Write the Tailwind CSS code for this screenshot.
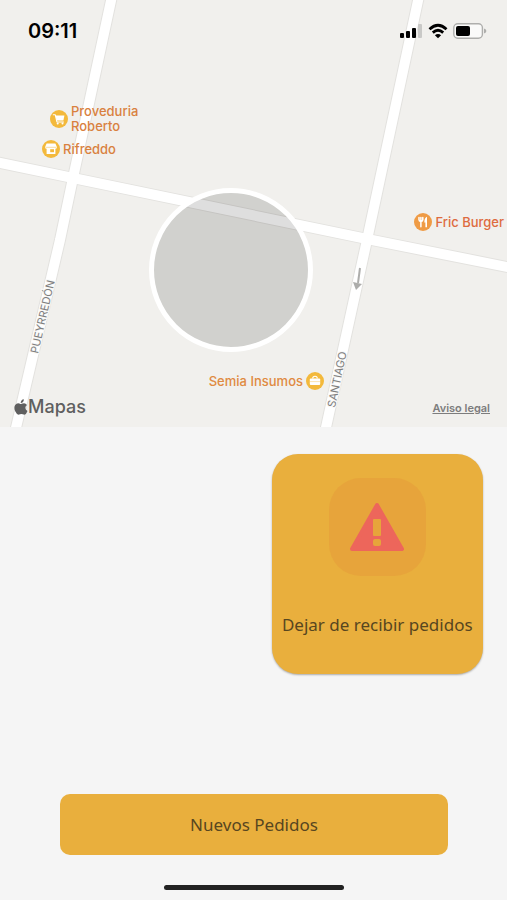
<!DOCTYPE html>
<html lang="es">
<head>
    <meta charset="UTF-8">
    <meta name="viewport" content="width=device-width, initial-scale=1.0">
    <title>Pedidos</title>
    <script src="https://cdn.jsdelivr.net/npm/@tailwindcss/browser@4"></script>
</head>
<body class="min-h-screen flex flex-col bg-[#f5f5f5] font-['Inter',sans-serif]">

    <!-- Map -->
    <section class="relative h-[427px] overflow-hidden bg-[#f1f0ed]">
        <svg class="absolute top-0 left-0 w-full h-full" viewBox="0 0 507 427" preserveAspectRatio="xMidYMid slice" aria-hidden="true">
            <g fill="none" stroke="#e3e2df" stroke-width="12">
                <path d="M112 -4L73 178L60 240L15 432"/>
                <path d="M419 -4L367 240L325 432"/>
                <path d="M-4 162L73 178L367 239L512 268"/>
            </g>
            <g fill="none" stroke="#fff" stroke-width="10">
                <path d="M112 -4L73 178L60 240L15 432"/>
                <path d="M419 -4L367 240L325 432"/>
                <path d="M-4 162L73 178L367 239L512 268"/>
            </g>
            <!-- One-way arrow -->
            <path d="M360 268L358 283" stroke="#adadab" stroke-width="2" fill="none"/>
            <path d="M353 282L362 284L356 290Z" fill="#adadab"/>
            <g font-size="11" fill="#7f7f7f" stroke="#f8f8f7" stroke-width="2" paint-order="stroke">
                <text transform="translate(38 354) rotate(-77)">PUEYRREDÓN</text>
                <text transform="translate(335 408) rotate(-78)">SANTIAGO</text>
            </g>
        </svg>

        <!-- Status bar -->
        <header class="relative flex items-center justify-between pt-[15px] pl-7 pr-5">
            <time class="text-[20px] leading-8 font-semibold text-black">09:11</time>
            <div class="flex items-center gap-[5px]">
                <svg class="w-[23px] h-4" viewBox="0 0 23 16" aria-hidden="true">
                    <rect x="0" y="10" width="4" height="5" rx="1"/>
                    <rect x="6" y="8" width="4" height="7" rx="1"/>
                    <rect x="12" y="5" width="4" height="10" rx="1"/>
                    <rect x="18" y="1" width="4" height="14" rx="1" fill="#c9c9c7"/>
                </svg>
                <svg class="w-5 h-4" viewBox="0 0 20 16" aria-hidden="true">
                    <path d="M1.5 6.2Q10 -1.7 18.5 6.2M4.8 9.6Q10 4.9 15.2 9.6" fill="none" stroke="#000" stroke-width="2.8"/>
                    <path d="M10 15.3L6.9 12.2Q10 9.6 13.1 12.2Z"/>
                </svg>
                <svg class="w-[34px] h-4" viewBox="0 0 34 16" aria-hidden="true">
                    <rect x="0.8" y="0.8" width="28.6" height="14.4" rx="4" fill="#fafaf9" stroke="#aeaeac" stroke-width="1.4"/>
                    <rect x="3" y="3" width="14" height="10" rx="2"/>
                    <path d="M31 5.5Q33.4 6.3 33.4 8T31 10.5Z" fill="#aeaeac"/>
                </svg>
            </div>
        </header>

        <!-- Places -->
        <div class="absolute top-[104px] left-[50px] flex items-center gap-[3px] text-[13px] leading-[15px] font-medium text-[#d9813f]">
            <svg class="w-[18px] h-[18px]" viewBox="0 0 18 18" aria-hidden="true">
                <circle cx="9" cy="9" r="9" fill="#f3b93c"/>
                <path d="M3.3 4.8H5.3L6.9 12H13.5" fill="none" stroke="#fff" stroke-width="1.1" stroke-linecap="round" stroke-linejoin="round"/>
                <path d="M5.5 5.6H14.4L13.4 10.5H6.6Z" fill="#fff"/>
                <circle cx="7.7" cy="13.6" r="1" fill="#fff"/>
                <circle cx="12.5" cy="13.6" r="1" fill="#fff"/>
            </svg>
            <span>Proveduria<br>Roberto</span>
        </div>
        <div class="absolute top-[140px] left-[42px] flex items-center gap-[3px] text-[13px] leading-[15px] font-medium text-[#d9813f]">
            <svg class="w-[18px] h-[18px]" viewBox="0 0 18 18" aria-hidden="true">
                <circle cx="9" cy="9" r="9" fill="#f3b93c"/>
                <path d="M4.6 3.6H13.4L15 7.2Q14.8 8.8 13.4 8.8V14H4.6V8.8Q3.2 8.8 3 7.2Z" fill="#fff"/>
                <path d="M8.2 9.2H12V12.2H8.2Z" fill="#f3b93c"/>
                <path d="M3.6 7.3H14.4" stroke="#f3b93c" stroke-width="0.5"/>
            </svg>
            <span>Rifreddo</span>
        </div>
        <div class="absolute top-[213px] right-[3px] flex items-center gap-[3px] text-[13px] leading-[15px] font-medium text-[#de6b3f]">
            <svg class="w-[18px] h-[18px]" viewBox="0 0 18 18" aria-hidden="true">
                <circle cx="9" cy="9" r="9" fill="#ef9b45"/>
                <path d="M5 4.4V6.8Q5 8.2 6.9 8.4V13.8M6.9 4.4V8M8.8 4.4V6.8Q8.8 8.2 6.9 8.4" fill="none" stroke="#fff" stroke-width="1.5" stroke-linecap="round"/>
                <path d="M13 3.8V14.2H11.4V9.6H10.3Q10.3 5 13 3.8Z" fill="#fff"/>
            </svg>
            <span>Fric Burger</span>
        </div>
        <div class="absolute top-[372px] right-[183px] flex items-center gap-[3px] text-[13px] leading-[15px] font-medium text-[#e08a41]">
            <span>Semia Insumos</span>
            <svg class="w-[18px] h-[18px]" viewBox="0 0 18 18" aria-hidden="true">
                <circle cx="9" cy="9" r="9" fill="#f3b93c"/>
                <path d="M6.7 6.6Q6.7 4.3 9 4.3T11.3 6.6" fill="none" stroke="#fff" stroke-width="1.1"/>
                <rect x="3.8" y="6.4" width="10.4" height="6.6" rx="1" fill="#fff"/>
                <path d="M3.8 9.6H14.2" stroke="#f3b93c" stroke-width="0.4"/>
            </svg>
        </div>

        <!-- Current area -->
        <div class="absolute top-[188px] left-[149px] w-[164px] h-[164px] rounded-full border-[5px] border-white bg-black/13"></div>

        <div class="absolute bottom-[9px] left-[14px] flex items-center text-[#5f5f5f]">
            <svg class="w-[14px] h-4" viewBox="0 0 14 16" fill="currentColor" aria-hidden="true">
                <path d="M9.8 0.3Q10 2 9 3.1T6.7 4.1Q6.6 2.6 7.5 1.5T9.8 0.3Z"/>
                <path d="M7 5Q7.7 5 8.5 4.6Q11.3 3.5 13 6Q11.3 7.1 11.4 9Q11.5 11.1 13.5 12Q12.3 15.5 10.4 15.7Q9.6 15.7 8.8 15.3Q7.4 14.7 6 15.3Q5.2 15.7 4.6 15.7Q2.7 15.6 1.2 12.3Q-0.4 8.4 1.2 6Q2.9 3.6 5.4 4.5Q6.4 5 7 5Z"/>
            </svg>
            <span class="text-[18px] leading-[22px] font-medium">Mapas</span>
        </div>
        <a href="#" class="absolute bottom-3 right-[17px] text-[11px] leading-[14px] font-semibold text-[#7d7d7d] underline">Aviso legal</a>
    </section>

    <!-- Actions -->
    <main class="grow flex flex-col font-['Noto_Sans',sans-serif] text-[17px] leading-6 text-[#574620]">
        <div class="grid grid-cols-2 gap-9 px-6 pt-[27px]">
            <button type="button" class="col-start-2 h-[220px] flex flex-col items-center rounded-[26px] bg-[#e9af3d] pt-6 shadow-[0_1px_2px_rgba(0,0,0,0.3)]">
                <span class="w-[97px] h-[98px] flex items-center justify-center rounded-[32px] bg-[#e7a43b]">
                    <svg class="w-[56px] h-[50px]" viewBox="0 0 56 50" aria-hidden="true">
                        <path d="M28 3L53 47H3Z" fill="#ed665b" stroke="#ed665b" stroke-width="4" stroke-linejoin="round"/>
                        <rect x="24" y="17" width="8" height="17" rx="1" fill="#e7a43b"/>
                        <rect x="24" y="37" width="8" height="7" rx="2" fill="#e7a43b"/>
                    </svg>
                </span>
                <span class="mt-[37px] whitespace-nowrap">Dejar de recibir pedidos</span>
            </button>
        </div>
        <div class="mt-auto pl-[60px] pr-[59px] pb-[30px]">
            <button type="button" class="w-full h-[61px] rounded-[10px] bg-[#e9af3d]">Nuevos Pedidos</button>
        </div>
    </main>

    <!-- Home indicator -->
    <footer class="flex justify-center pb-[10px]">
        <div class="w-[180px] h-[5px] rounded-full bg-[#222]"></div>
    </footer>
</body>
</html>
